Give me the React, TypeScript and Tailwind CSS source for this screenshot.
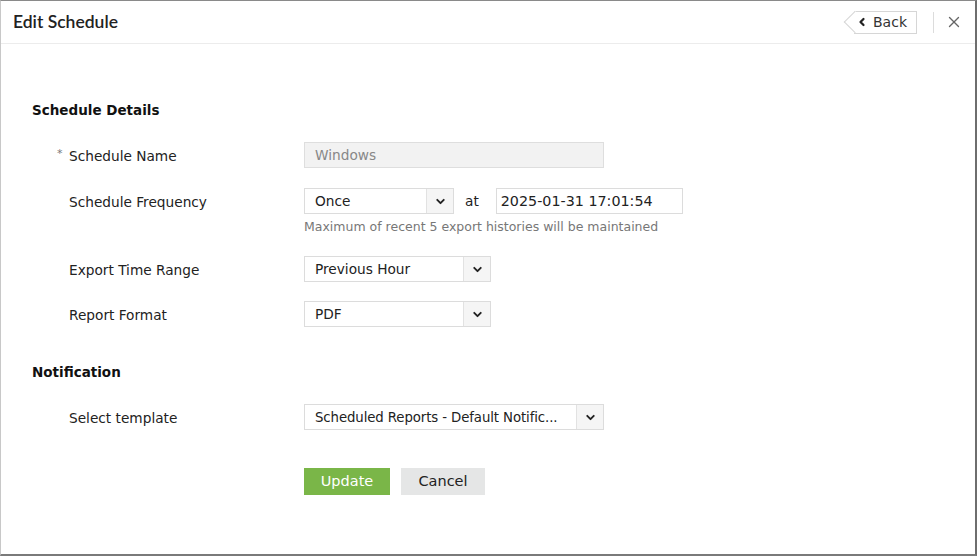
import { ChevronDown, ChevronLeft, X } from "lucide-react";

const labelFont = { fontFamily: "Verdana, 'DejaVu Sans', sans-serif" };

function Select({ value, width, tight }: { value: string; width: string; tight?: boolean }) {
  return (
    <div className={`flex h-[26px] ${width} border border-[#dcdcdc] bg-white`}>
      <div
        className={`flex-1 overflow-hidden whitespace-nowrap px-[10px] leading-[25px] text-[#222] ${
          tight ? "text-[13.3px] tracking-[-0.1px]" : "text-[13.7px]"
        }`}
      >
        {value}
      </div>
      <div className="flex w-[27px] items-center justify-center border-l border-[#e2e2e2] bg-[#f5f5f5]">
        <ChevronDown size={13} strokeWidth={3.5} className="text-[#222]" />
      </div>
    </div>
  );
}

function Row({ label, required, children }: { label: string; required?: boolean; children: React.ReactNode }) {
  return (
    <div className="flex items-start">
      <div className="relative top-[1px] w-[272px] pl-[37px] text-[13.7px] leading-[26px] text-[#222]">
        {required && <span className="absolute left-[25px] top-[-2px] text-[11px] text-[#777]">*</span>}
        {label}
      </div>
      <div>{children}</div>
    </div>
  );
}

export default function App() {
  return (
    <div className="h-[556px] w-[977px] overflow-hidden border-t border-l border-r-2 border-b-2 border-t-[#8a8a8a] border-l-[#c8c8c8] border-r-[#6e6e6e] border-b-[#7a7a7a] bg-white" style={labelFont}>
      {/* header */}
      <div className="flex h-[43px] items-center justify-between border-b border-[#ececec] pl-[12px] pr-[12px]">
        <h1 className="text-[17.5px] font-semibold text-[#222]" style={{ fontFamily: "Lato, sans-serif" }}>Edit Schedule</h1>
        <div className="flex items-center">
          <button className="relative flex h-[23px] items-center border border-l-0 border-[#d6d6d6] bg-white pl-[2px] pr-[9px] text-[14px] text-[#333]">
            <span className="absolute left-[-7px] top-[2px] h-[16px] w-[16px] rotate-45 border-b border-l border-[#d6d6d6] bg-white" />
            <ChevronLeft size={12} strokeWidth={4.5} className="relative mr-[5px] text-[#222]" />
            <span className="relative">Back</span>
          </button>
          <div className="ml-[16px] mr-[11px] h-[21px] w-px bg-[#dcdcdc]" />
          <X size={18} strokeWidth={1.8} className="text-[#666]" />
        </div>
      </div>

      <div className="pl-[31px] pt-[56px]">
        <h2 className="text-[13.5px] font-bold leading-[20px] text-[#111]">Schedule Details</h2>

        <div className="mt-[22px] flex flex-col">
          <Row label="Schedule Name" required>
            <div className="h-[26px] w-[300px] border border-[#dedede] bg-[#f2f2f2] px-[10px] text-[13.7px] leading-[24px] text-[#888]">Windows</div>
          </Row>

          <div className="mt-[20px]">
            <Row label="Schedule Frequency">
              <div className="flex items-center">
                <Select value="Once" width="w-[150px]" />
                <span className="ml-[11px] mr-[17px] text-[13.7px] text-[#222]">at</span>
                <div className="h-[26px] w-[187px] border border-[#dcdcdc] px-[4px] text-[14.3px] leading-[24px] text-[#222]">2025-01-31 17:01:54</div>
              </div>
              <p className="mt-[4px] text-[12.5px] leading-[18px] text-[#777]">Maximum of recent 5 export histories will be maintained</p>
            </Row>
          </div>

          <div className="mt-[20px]">
            <Row label="Export Time Range">
              <Select value="Previous Hour" width="w-[187px]" />
            </Row>
          </div>

          <div className="mt-[19px]">
            <Row label="Report Format">
              <Select value="PDF" width="w-[187px]" />
            </Row>
          </div>
        </div>

        <h2 className="mt-[35px] text-[13.5px] font-bold leading-[20px] text-[#111]">Notification</h2>

        <div className="mt-[22px]">
          <Row label="Select template">
            <Select value="Scheduled Reports - Default Notific..." width="w-[300px]" tight />
          </Row>
        </div>

        <div className="mt-[38px] flex gap-[11px] pl-[272px]">
          <button className="h-[27px] w-[86px] bg-[#7ab648] text-[14.5px] text-white">Update</button>
          <button className="h-[27px] w-[84px] bg-[#e5e6e6] text-[14.5px] text-[#222]">Cancel</button>
        </div>
      </div>
    </div>
  );
}
